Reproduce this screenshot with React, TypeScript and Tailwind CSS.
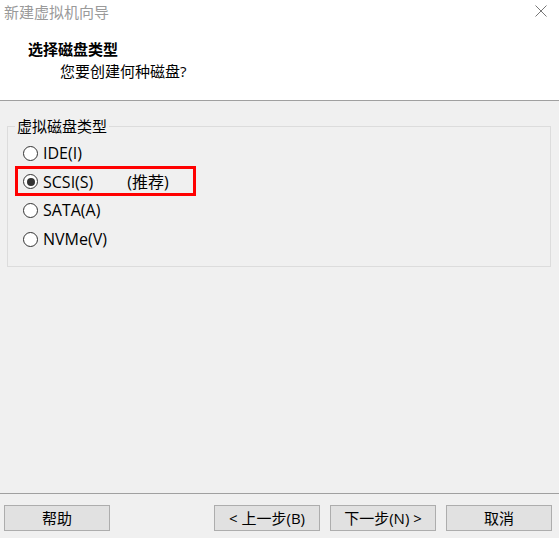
const FONT = "font-['Open_Sans','Noto_Sans_CJK_SC',sans-serif]";

function Radio({ label, checked }: { label: string; checked?: boolean }) {
  return (
    <label className="flex items-center h-[28.6px] pl-[15px]">
      <span className="w-[15px] h-[15px] rounded-full border border-[#333] bg-white flex items-center justify-center shrink-0">
        {checked && <span className="w-[8px] h-[8px] rounded-full bg-[#333]" />}
      </span>
      <span className="ml-[5px] text-[16px] leading-[20px] text-black">{label}</span>
    </label>
  );
}

function Button({ children, className = "" }: { children: React.ReactNode; className?: string }) {
  return (
    <button
      className={`h-[26px] w-[106px] border border-[#adadad] bg-[#e1e1e1] text-[15px] leading-[18px] text-black ${className}`}
    >
      {children}
    </button>
  );
}

export default function App() {
  return (
    <div className={`w-[559px] h-[538px] bg-[#f0f0f0] flex flex-col ${FONT}`}>
      {/* Title bar + header */}
      <div className="h-[101px] bg-white border-b border-[#a0a0a0] flex flex-col shrink-0">
        <div className="flex items-start justify-between pl-[4px] pr-[12px] pt-[2px]">
          <span className="text-[15px] leading-[20px] text-[#9a9a9a]">新建虚拟机向导</span>
          <svg width="12" height="12" viewBox="0 0 12 12" className="mt-[3px]">
            <path d="M0.5 0.5 L11.5 11.5 M11.5 0.5 L0.5 11.5" stroke="#777" strokeWidth="1" />
          </svg>
        </div>
        <div className="pl-[28px] pt-[16px] text-[15px] leading-[22px] font-bold text-black">选择磁盘类型</div>
        <div className="pl-[60px] text-[15px] leading-[22px] text-black">您要创建何种磁盘?</div>
      </div>

      {/* Group box */}
      <fieldset className="mx-[7px] mt-[16px] h-[150px] border border-[#dcdcdc] pt-[4px] shrink-0 w-[544px]">
        <legend className="ml-[7px] px-[2px] text-[15px] leading-[18px] text-black">虚拟磁盘类型</legend>
        <Radio label="IDE(I)" />
        <div className="relative">
          <span className="absolute left-[7px] top-[-2px] w-[181px] h-[30px] border-[3px] border-[#ff0000] pointer-events-none" />
          <label className="flex items-center h-[28.6px] pl-[15px]">
            <span className="w-[15px] h-[15px] rounded-full border border-[#333] bg-white flex items-center justify-center shrink-0">
              <span className="w-[8px] h-[8px] rounded-full bg-[#333]" />
            </span>
            <span className="ml-[5px] text-[16px] leading-[20px] text-black">SCSI(S)</span>
            <span className="ml-[34px] text-[16px] leading-[20px] text-black">(推荐)</span>
          </label>
        </div>
        <Radio label="SATA(A)" />
        <Radio label="NVMe(V)" />
      </fieldset>

      <div className="flex-1" />

      {/* Footer */}
      <div className="border-t border-[#a0a0a0] h-[45px] flex items-start pt-[11px] pl-[4px] shrink-0">
        <Button>帮助</Button>
        <Button className="ml-[104px]">&lt; 上一步(B)</Button>
        <Button className="ml-[10px]">下一步(N) &gt;</Button>
        <Button className="ml-[10px]">取消</Button>
      </div>
    </div>
  );
}
